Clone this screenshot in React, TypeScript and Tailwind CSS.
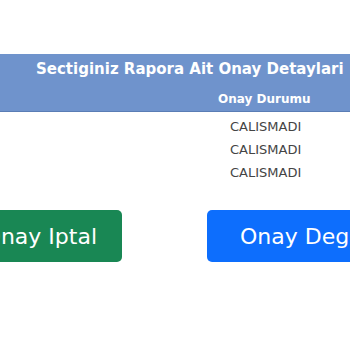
export default function App() {
  const rows = ['CALISMADI', 'CALISMADI', 'CALISMADI'];
  return (
    <div className="w-[350px] h-[350px] overflow-hidden bg-white font-['DejaVu_Sans',Verdana,sans-serif]">
      <div className="mt-[54px] h-[58px] bg-[#6f93cc] border-b border-[#5a7db5] text-white font-bold">
        <div className="pl-[36px] pt-[5px] text-[15px] leading-[20px] whitespace-nowrap">
          Sectiginiz Rapora Ait Onay Detaylari
        </div>
        <div className="pl-[218px] pt-[12px] text-[12px] leading-[16px] whitespace-nowrap">Onay Durumu</div>
      </div>
      <div className="flex flex-col pt-[3px]">
        {rows.map((r, i) => (
          <div key={i} className="h-[23px] pl-[230px] text-[13px] leading-[23px] text-[#444]">
            {r}
          </div>
        ))}
      </div>
      <div className="flex gap-[85px] mt-[26px] -ml-[50px]">
        <button className="h-[52px] w-[172px] shrink-0 rounded-[5px] bg-[#198754] text-white text-[22px] pr-[25px] text-right whitespace-nowrap">
          Onay Iptal
        </button>
        <button className="h-[52px] w-[200px] shrink-0 rounded-[5px] bg-[#0d6efd] text-white text-[22px] pl-[33px] text-left whitespace-nowrap">
          Onay Degistir
        </button>
      </div>
    </div>
  );
}
